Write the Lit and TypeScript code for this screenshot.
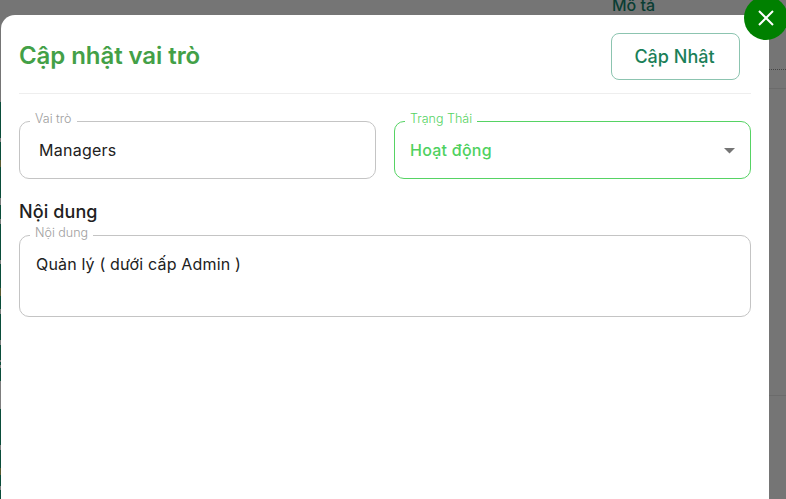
import { LitElement, html, css } from "lit";
import { customElement } from "lit/decorators.js";

const DARK = "#0a4d3a";
const GREY = "#7d7d7d";
const BROWN = "#5a5a30";

// left edge of the page behind the dialog: [height, colour], starts at y=102
const EDGE_ROWS: [number, string][] = [
  [36, DARK], [4, GREY], [18, DARK], [7, BROWN], [31, DARK], [7, GREY], [14, DARK], [5, GREY],
  [36, DARK], [4, GREY], [24, DARK], [8, BROWN], [13, DARK], [5, GREY], [26, DARK], [5, GREY],
  [15, DARK], [2, GREY], [3, DARK], [3, GREY], [13, DARK], [28, GREY], [36, DARK], [5, GREY],
  [18, DARK], [7, BROWN], [11, DARK], [4, GREY], [9, DARK],
];

@customElement("outlined-field")
class OutlinedField extends LitElement {
  static properties = {
    label: { type: String },
    active: { type: Boolean },
    multiline: { type: Boolean },
  };
  label = "";
  active = false;
  multiline = false;

  static styles = css`
    :host {
      display: block;
    }
    fieldset {
      margin: 0;
      padding: 0 15px;
      height: 65px;
      box-sizing: border-box;
      border: 1px solid #c4c4c4;
      border-radius: 10px;
      display: flex;
      align-items: center;
      justify-content: space-between;
      font-size: 16px;
      font-weight: 400;
      letter-spacing: 0.25px;
      color: #212121;
    }
    legend {
      margin-left: -5px;
      padding: 0 5px;
      font-size: 12.5px;
      line-height: 14px;
      letter-spacing: 0;
      color: #9e9e9e;
      font-weight: 300;
    }
    legend span {
      position: relative;
      top: -2px;
    }
    .body {
      flex: 1;
      position: relative;
      top: -3px;
      padding-left: 4px;
    }
    .active {
      border-color: #56d364;
      color: #4fd15f;
      font-weight: 500;
    }
    .active legend {
      color: #56d364;
    }
    .active .body {
      padding-left: 0;
    }
    .multi {
      height: 89px;
      align-items: flex-start;
      letter-spacing: 0.17px;
    }
    .multi .body {
      top: 12px;
      padding-left: 1px;
    }
    svg {
      position: relative;
      top: -2px;
      display: block;
    }
  `;

  render() {
    const cls = `${this.active ? "active" : ""} ${this.multiline ? "multi" : ""}`;
    return html`
      <fieldset class=${cls}>
        <legend><span>${this.label}</span></legend>
        <div class="body"><slot></slot></div>
        ${this.active
          ? html`<svg width="11" height="5.5" viewBox="0 0 12 6"><path d="M0 0h12L6 6z" fill="#757575" /></svg>`
          : ""}
      </fieldset>
    `;
  }
}

@customElement("app-root")
export class AppRoot extends LitElement {
  static styles = css`
    :host {
      display: block;
      position: relative;
      width: 786px;
      height: 499px;
      overflow: hidden;
      background: #757575;
      font-family: Inter, "Noto Sans", sans-serif;
    }
    .behind-title {
      position: absolute;
      left: 612px;
      top: -5px;
      font-size: 16px;
      font-weight: 500;
      color: #0a3d33;
    }
    .edge {
      position: absolute;
      left: 0;
      top: 102px;
      width: 1px;
      display: flex;
      flex-direction: column;
    }
    .dotted {
      position: absolute;
      left: 769px;
      right: 0;
      top: 69px;
      border-top: 1px dotted #444;
    }
    .rule {
      position: absolute;
      left: 769px;
      right: 0;
      border-top: 1px solid #6b6b6b;
    }
    .dialog {
      position: absolute;
      left: 1px;
      top: 15px;
      width: 768px;
      height: 484px;
      box-sizing: border-box;
      padding: 0 18px;
      background: #fff;
      border-radius: 14px 14px 0 0;
    }
    header {
      height: 79px;
      box-sizing: border-box;
      padding: 18px 11px 0 0;
      display: flex;
      justify-content: space-between;
      align-items: flex-start;
      border-bottom: 1px solid #eeeeee;
    }
    h2 {
      margin: 0;
      line-height: 46px;
      font-size: 24px;
      font-weight: 600;
      letter-spacing: -0.07px;
      color: #43a047;
    }
    .save {
      width: 129px;
      height: 47px;
      padding: 0 2px 0 0;
      border: 1px solid #8cc4b0;
      border-radius: 8px;
      background: #fff;
      color: #1a8058;
      font: 500 18px Inter, "Noto Sans", sans-serif;
    }
    .row {
      display: grid;
      grid-template-columns: 357px 357px;
      gap: 18px;
      margin-top: 20px;
    }
    h3 {
      margin: 20px 0 3px;
      font-size: 18px;
      line-height: 26px;
      font-weight: 500;
      letter-spacing: 0.1px;
      color: #212121;
    }
    .close {
      position: absolute;
      left: 744px;
      top: -4px;
      width: 44px;
      height: 44px;
      border-radius: 50%;
      background: #008000;
      display: flex;
      align-items: center;
      justify-content: center;
    }
  `;

  render() {
    return html`
      <div class="behind-title">Mô tả</div>
      <div class="edge">
        ${EDGE_ROWS.map(([h, c]) => html`<div style="height:${h}px;background:${c}"></div>`)}
      </div>
      <div class="dotted"></div>
      <div class="rule" style="top:88px"></div>
      <div class="rule" style="top:395px"></div>

      <div class="dialog">
        <header>
          <h2>Cập nhật vai trò</h2>
          <button class="save">Cập Nhật</button>
        </header>
        <div class="row">
          <outlined-field label="Vai trò">Managers</outlined-field>
          <outlined-field label="Trạng Thái" active>Hoạt động</outlined-field>
        </div>
        <h3>Nội dung</h3>
        <outlined-field label="Nội dung" multiline>Quản lý ( dưới cấp Admin )</outlined-field>
      </div>

      <div class="close">
        <svg width="18" height="18" viewBox="0 0 18 18">
          <path d="M2 2l14 14M16 2L2 16" stroke="#fff" stroke-width="2" fill="none" />
        </svg>
      </div>
    `;
  }
}
